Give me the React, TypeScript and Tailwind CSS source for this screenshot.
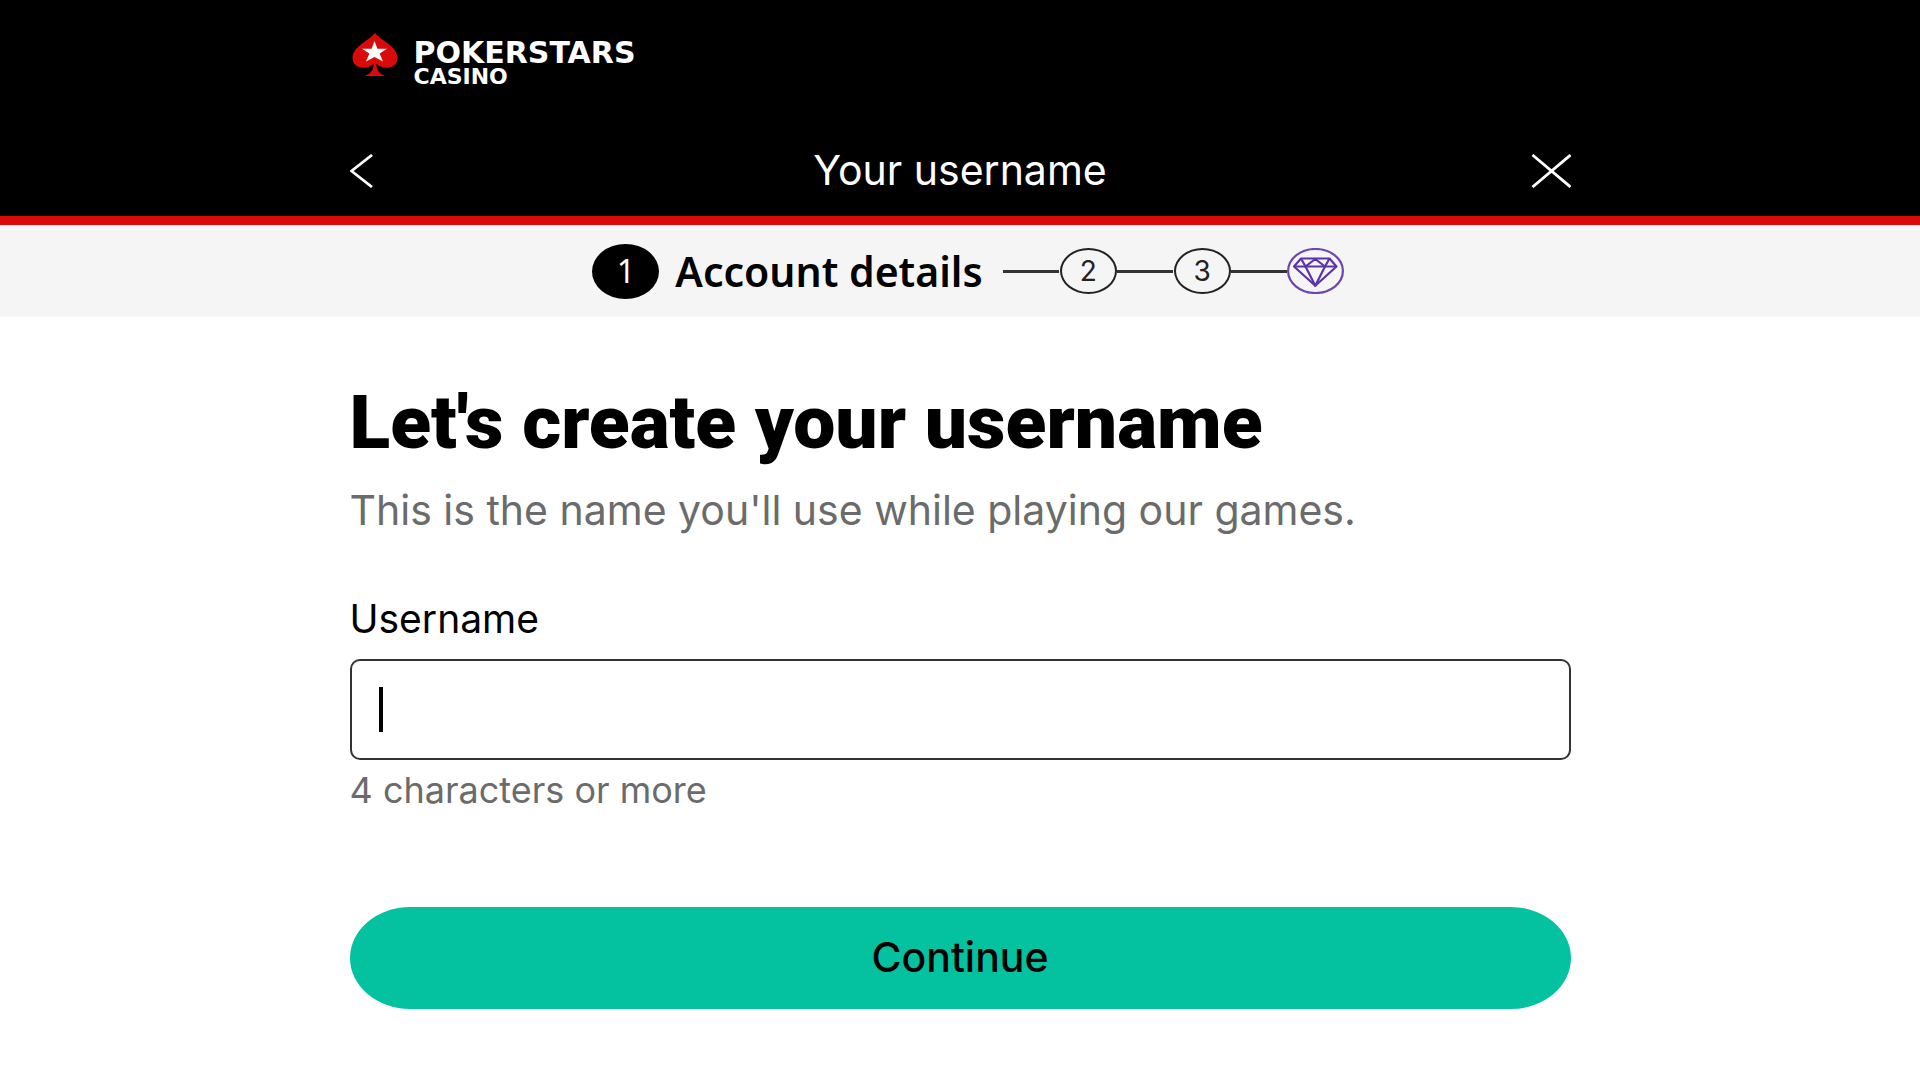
function Logo() {
	return (
		<a
			href="#"
			className="
        flex
        items-start
        gap-4
        w-fit
        text-white"
		>
			<svg viewBox="0 0 46 44" className="w-[46px] h-11 ml-0.5 mt-0.5" aria-hidden="true">
				<path
					fill="#d80a0a"
					d="M23 0C18 7 1 13 .5 24.500C.2 32 7 35.500 13 34.500C17 34 20 32.500 21.800 31C21.500 37 18.500 41 13.500 42.500V43H32.500V42.500C27.500 41 24.500 37 24.200 31C26 32.500 29 34 33 34.500C39 35.500 45.800 32 45.500 24.500C45 13 28 7 23 0Z"
				/>
				<path
					fill="#fff"
					d="M22.500 8L25.400 15.800H35L27.600 20.500L31 28.600L22.500 24L14 28.600L17.400 20.500L10 15.800H19.600Z"
				/>
			</svg>
			<span
				className="
          flex
          flex-col
          pt-3
          font-['DejaVu_Sans',sans-serif]
          font-bold"
			>
				<span className="text-3xl leading-5">POKERSTARS</span>
				<span className="text-[22px] leading-7">CASINO</span>
			</span>
		</a>
	);
}

function Step({ number }: { number: number }) {
	return (
		<li className="flex items-center">
			<span className="w-14 h-[3px] mr-px bg-[#333333]" />
			<span
				className="
          flex
          justify-center
          items-center
          w-[57px]
          h-[46px]
          rounded-[50%]
          border-2
          border-[#222222]
          text-[28px]
          text-[#222222]"
			>
				{number}
			</span>
		</li>
	);
}

function Steps() {
	return (
		<ol
			className="
        flex
        justify-center
        items-center
        w-full
        h-[92px]
        pl-4
        bg-[#f5f5f5]"
		>
			<li className="flex items-center gap-4 mr-5">
				<span
					className="
            flex
            justify-center
            items-center
            w-[67px]
            h-[55px]
            rounded-[50%]
            bg-black
            text-white
            text-[32px]
            font-['Noto_Sans',sans-serif]"
				>
					1
				</span>
				<span className="text-[41px] leading-none font-semibold font-['Noto_Sans',sans-serif]">
					Account details
				</span>
			</li>
			<Step number={2} />
			<Step number={3} />
			<li className="flex items-center">
				<span className="w-14 h-[3px] bg-[#333333]" />
				<svg
					viewBox="0 0 57 46"
					className="w-[57px] h-[46px]"
					fill="none"
					stroke="#5c33a8"
					strokeWidth="2.200"
					strokeLinejoin="round"
					role="img"
					aria-label="Reward"
				>
					<ellipse cx="28.5" cy="23" rx="27.400" ry="22" stroke="#6b46b5" />
					<path d="M14 10.500H42.500L49.500 18.500L28.300 37.700L7 18.500Z" />
					<path d="M7 18.500H49.500" />
					<path d="M14 10.500L18.500 18.500L28.300 11L38 18.500L42.500 10.500" />
					<path d="M18.500 18.500L28.300 37.700L38 18.500" />
				</svg>
			</li>
		</ol>
	);
}

export default function App() {
	return (
		<div className="min-h-screen bg-white text-black font-['Inter',sans-serif]">
			<header
				className="
          bg-black
          text-white
          border-b-[9px]
          border-[#d80a0a]"
			>
				<div className="w-full max-w-[1221px] mx-auto pt-[31px]">
					<Logo />
					<div
						className="
              flex
              justify-between
              items-center
              h-[91px]
              mt-[34px]"
					>
						<button type="button" aria-label="Back">
							<svg viewBox="0 0 40 34" className="w-10 h-[34px]" fill="none" stroke="currentColor" strokeWidth="2.800">
								<path d="M22 1L1.500 17L22 33" />
							</svg>
						</button>
						<p className="text-[41px] leading-none">Your username</p>
						<button type="button" aria-label="Close">
							<svg viewBox="0 0 40 34" className="w-10 h-[34px]" fill="none" stroke="currentColor" strokeWidth="2.800">
								<path d="M1.500 1L39.500 33M39.500 1L1.500 33" />
							</svg>
						</button>
					</div>
				</div>
			</header>
			<Steps />
			<main className="w-full max-w-[1221px] mx-auto pt-[65px] pb-[71px]">
				<h1 className="text-[75px] leading-[80px] font-black font-['Roboto',sans-serif]">
					Let's create your username
				</h1>
				<p className="mt-5 text-[41px] leading-14 text-[#6b6b6b]">
					This is the name you'll use while playing our games.
				</p>
				<form className="flex flex-col mt-[57px]">
					<label htmlFor="username" className="text-[39px] leading-12">
						Username
					</label>
					<div className="relative mt-4">
						<input
							id="username"
							name="username"
							type="text"
							aria-describedby="username-hint"
							className="
                block
                w-full
                h-[101px]
                px-8
                rounded-[10px]
                border-2
                border-[#333333]
                outline-none
                text-[39px]"
						/>
						<span className="absolute left-[29px] top-7 w-1 h-[45px] bg-black" />
					</div>
					<p id="username-hint" className="mt-2 text-4xl leading-11 text-[#6b6b6b]">
						4 characters or more
					</p>
					<button
						type="submit"
						className="
              w-full
              h-[102px]
              mt-[95px]
              rounded-[60px/51px]
              bg-[#04c1a0]
              text-[41px]
              font-medium"
					>
						Continue
					</button>
				</form>
			</main>
		</div>
	);
}
